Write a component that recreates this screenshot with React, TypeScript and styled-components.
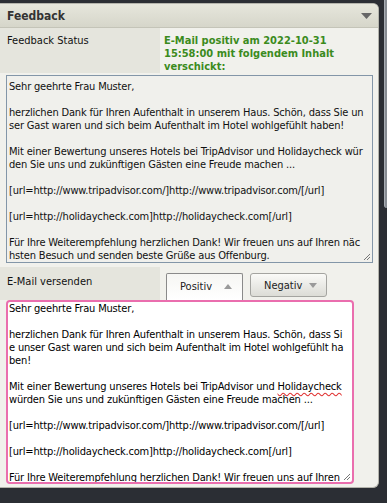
import React from 'react';
import styled, { createGlobalStyle } from 'styled-components';

const GlobalStyle = createGlobalStyle`
  body {
    margin: 0;
    background: #2b2e34;
    font-family: "DejaVu Sans Condensed", "DejaVu Sans", "Liberation Sans", sans-serif;
    font-stretch: condensed;
  }
`;

const sentText = [
  'Sehr geehrte Frau Muster,',
  '',
  'herzlichen Dank für Ihren Aufenthalt in unserem Haus. Schön, dass Sie un',
  'ser Gast waren und sich beim Aufenthalt im Hotel wohlgefühlt haben!',
  '',
  'Mit einer Bewertung unseres Hotels bei TripAdvisor und Holidaycheck wür',
  'den Sie uns und zukünftigen Gästen eine Freude machen ...',
  '',
  '[url=http://www.tripadvisor.com/]http://www.tripadvisor.com/[/url]',
  '',
  '[url=http://holidaycheck.com]http://holidaycheck.com[/url]',
  '',
  'Für Ihre Weiterempfehlung herzlichen Dank! Wir freuen uns auf Ihren näc',
  'hsten Besuch und senden beste Grüße aus Offenburg.',
];

const ResizeGrip = () => (
  <Grip width="8" height="8" viewBox="0 0 8 8">
    <path d="M7 1 L1 7 M7 4 L4 7" stroke="#777" strokeWidth="1" />
  </Grip>
);

const Caret = ({ up }: { up?: boolean }) => (
  <svg width="8" height="5" viewBox="0 0 8 5">
    <path d={up ? 'M0 5 L4 0 L8 5 Z' : 'M0 0 L8 0 L4 5 Z'} fill="#9a9a9a" />
  </svg>
);

const App = () => {
  return (
    <>
      <GlobalStyle />
      <Page>
        <Panel>
          <Header>
            <Title>Feedback</Title>
            <svg width="11" height="6" viewBox="0 0 11 6">
              <path d="M0 0 L11 0 L5.5 6 Z" fill="#666" />
            </svg>
          </Header>

          <Row>
            <LabelCell>Feedback Status</LabelCell>
            <StatusCell>
              E-Mail positiv am 2022-10-31 15:58:00 mit folgendem Inhalt verschickt:
            </StatusCell>
          </Row>

          <SentBox>
            {sentText.map((line, i) => (
              <Line key={i}>{line}</Line>
            ))}
            <ResizeGrip />
          </SentBox>

          <SendRow>
            <LabelCell $tall>E-Mail versenden</LabelCell>
            <Tabs>
              <TabButton $active>
                Positiv <Caret up />
              </TabButton>
              <TabButton>
                Negativ <Caret />
              </TabButton>
            </Tabs>
          </SendRow>

          <EditBox>
            <Line>Sehr geehrte Frau Muster,</Line>
            <Line />
            <Line>herzlichen Dank für Ihren Aufenthalt in unserem Haus. Schön, dass Si</Line>
            <Line>e unser Gast waren und sich beim Aufenthalt im Hotel wohlgefühlt ha</Line>
            <Line>ben!</Line>
            <Line />
            <Line>
              Mit einer Bewertung unseres Hotels bei TripAdvisor und <Misspelled>Holidaycheck</Misspelled>
            </Line>
            <Line>würden Sie uns und zukünftigen Gästen eine Freude machen ...</Line>
            <Line />
            <Line>[url=http://www.tripadvisor.com/]http://www.tripadvisor.com/[/url]</Line>
            <Line />
            <Line>[url=http://holidaycheck.com]http://holidaycheck.com[/url]</Line>
            <Line />
            <Line>Für Ihre Weiterempfehlung herzlichen Dank! Wir freuen uns auf Ihren</Line>
            <ResizeGrip />
          </EditBox>
        </Panel>
        <SideStrip />
      </Page>
    </>
  );
};

export default App;

const Page = styled.div`
  display: flex;
  align-items: flex-start;
  width: 387px;
  height: 503px;
  overflow: hidden;
`;

const Panel = styled.div`
  margin-top: 3px;
  width: 378px;
  height: 483px;
  flex-shrink: 0;
  display: flex;
  flex-direction: column;
  background: #f1f1ec;
  border: 1px solid #b4b4ac;
  border-left: none;
  border-radius: 0 6px 6px 0;
  overflow: hidden;
  font-size: 11px;
  color: #111;
`;

const Header = styled.div`
  height: 23px;
  flex-shrink: 0;
  display: flex;
  align-items: center;
  justify-content: space-between;
  padding: 0 6px 0 7px;
  background: linear-gradient(#e6e6dc, #d6d6ca);
  border-bottom: 1px solid #c4c4b8;
`;

const Title = styled.span`
  font-size: 12px;
  font-weight: bold;
  color: #333;
`;

const Row = styled.div`
  display: grid;
  grid-template-columns: 160px 1fr;
`;

const LabelCell = styled.div<{ $tall?: boolean }>`
  background: #e5e5dd;
  padding: ${(p) => (p.$tall ? '8px 7px 0' : '6px 7px 0')};
  line-height: 13px;
  height: ${(p) => (p.$tall ? '33px' : '45px')};
  box-sizing: border-box;
`;

const StatusCell = styled.div`
  padding: 6px 4px 0;
  line-height: 13px;
  font-weight: bold;
  color: #3b8b1d;
`;

const SentBox = styled.div`
  position: relative;
  margin: 2px 5px 0 6px;
  height: 188px;
  box-sizing: border-box;
  padding: 4px 2px 0;
  background: #f0f0ec;
  border: 1px solid #8396a8;
  overflow: hidden;
`;

const Line = styled.div`
  height: 13px;
  line-height: 13px;
  white-space: pre;
  letter-spacing: -0.17px;
`;

const Grip = styled.svg`
  position: absolute;
  right: 1px;
  bottom: 1px;
`;

const SendRow = styled.div`
  display: grid;
  grid-template-columns: 160px 1fr;
  margin-top: 4px;
`;

const Tabs = styled.div`
  display: flex;
  align-items: flex-start;
  gap: 7px;
  padding: 6px 0 0 6px;
`;

const TabButton = styled.div<{ $active?: boolean }>`
  width: 77px;
  height: ${(p) => (p.$active ? '27px' : '24px')};
  box-sizing: border-box;
  display: flex;
  align-items: center;
  justify-content: space-between;
  padding: ${(p) => (p.$active ? '0 10px 2px 13px' : '0 9px 0 13px')};
  font-size: 11px;
  color: #222;
  border: 1px solid ${(p) => (p.$active ? '#8a8a8a' : '#a4a4a0')};
  border-bottom: ${(p) => (p.$active ? 'none' : '1px solid #a4a4a0')};
  border-radius: ${(p) => (p.$active ? '2px 2px 0 0' : '3px')};
  background: ${(p) =>
    p.$active ? 'linear-gradient(#f6f6f3, #ffffff)' : 'linear-gradient(#fafaf7, #dcdcd6)'};
`;

const EditBox = styled.div`
  position: relative;
  margin: 0 0 0 6px;
  width: 348px;
  height: 184px;
  box-sizing: border-box;
  padding: 0 1px;
  background: #fff;
  border: 2px solid #ea6eae;
  border-radius: 4px;
  overflow: hidden;
  color: #000;
`;

const Misspelled = styled.span`
  text-decoration: underline wavy #e03030;
  text-underline-offset: 2px;
`;

const SideStrip = styled.div`
  margin-left: 5px;
  width: 4px;
  height: 208px;
  background: #878c93;
  border-left: 1px solid #a9aeb4;
  border-radius: 0 0 0 3px;
`;
